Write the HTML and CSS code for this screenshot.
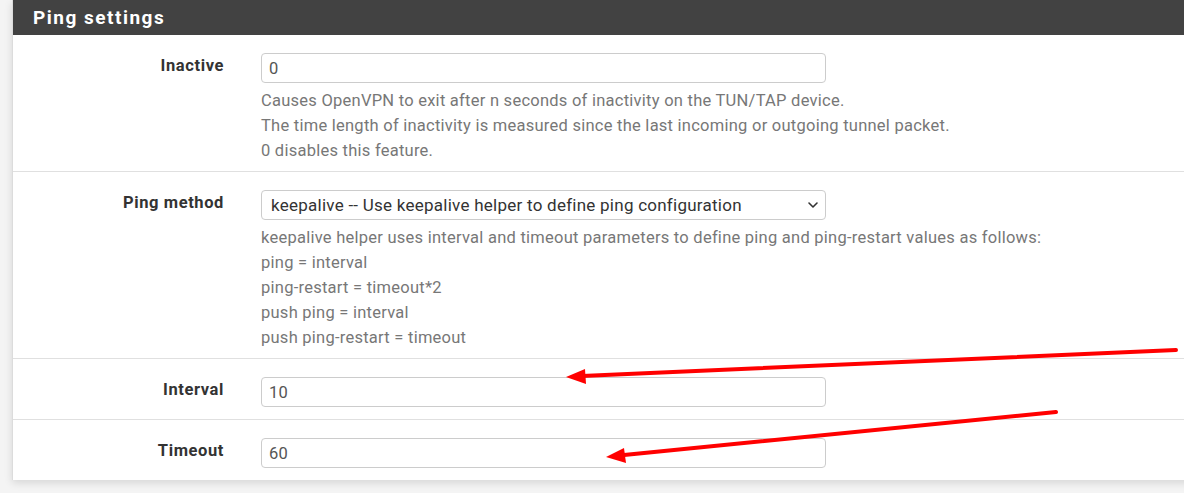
FILE: index.html
```html
<!DOCTYPE html>
<html>
<head>
<meta charset="utf-8">
<link rel="stylesheet" href="styles.css">
</head>
<body>
<div class="page">
  <div class="panel">
    <div class="panel-heading"><h2 class="panel-title">Ping settings</h2></div>
    <div class="panel-body">
      <div class="form-row first">
        <label class="row-label">Inactive</label>
        <div class="row-field">
          <input class="form-control" type="text" value="0">
          <div class="help">Causes OpenVPN to exit after n seconds of inactivity on the TUN/TAP device.<br>The time length of inactivity is measured since the last incoming or outgoing tunnel packet.<br>0 disables this feature.</div>
        </div>
      </div>
      <div class="form-row">
        <label class="row-label">Ping method</label>
        <div class="row-field">
          <div class="select-wrap">
            <select class="form-control select">
              <option>keepalive -- Use keepalive helper to define ping configuration</option>
            </select>
            <svg class="chevron" width="12" height="8" viewBox="0 0 12 8"><path d="M2 2 L6 6 L10 2" fill="none" stroke="#333" stroke-width="1.6" stroke-linecap="round" stroke-linejoin="round"/></svg>
          </div>
          <div class="help">keepalive helper uses interval and timeout parameters to define ping and ping-restart values as follows:<br>ping = interval<br>ping-restart = timeout*2<br>push ping = interval<br>push ping-restart = timeout</div>
        </div>
      </div>
      <div class="form-row">
        <label class="row-label">Interval</label>
        <div class="row-field">
          <input class="form-control" type="text" value="10">
        </div>
      </div>
      <div class="form-row">
        <label class="row-label">Timeout</label>
        <div class="row-field">
          <input class="form-control" type="text" value="60">
        </div>
      </div>
    </div>
  </div>
  <svg class="arrows" width="1184" height="493" viewBox="0 0 1184 493">
    <line x1="1176" y1="350" x2="582" y2="376" stroke="#ff0000" stroke-width="4" stroke-linecap="round"/>
    <polygon points="566,377 585,369 586,384" fill="#ff0000"/>
    <line x1="1056" y1="412" x2="624" y2="455" stroke="#ff0000" stroke-width="4" stroke-linecap="round"/>
    <polygon points="606,457 624,448 626,463" fill="#ff0000"/>
  </svg>
</div>
</body>
</html>
```

FILE: styles.css
```css
html, body {
  margin: 0;
  padding: 0;
}
body {
  background: #f4f4f4;
  font-family: Roboto, "Liberation Sans", sans-serif;
  width: 1184px;
  height: 493px;
  overflow: hidden;
}
.page {
  position: relative;
  width: 1184px;
  height: 493px;
}
.panel {
  margin-left: 12px;
  width: 1200px;
  background: #fff;
  border-left: 1px solid #dcdcdc;
  box-shadow: 0 3px 8px rgba(0, 0, 0, 0.12);
}
.panel-heading {
  background: #424242;
  height: 35px;
  display: flex;
  align-items: center;
  padding-left: 20px;
}
.panel-title {
  margin: 0;
  color: #fff;
  font-size: 19px;
  font-weight: 700;
  letter-spacing: 1.5px;
}
.form-row {
  display: grid;
  grid-template-columns: 248px 565px;
  padding: 18px 0 12px;
  border-top: 1px solid #e0e0e0;
}
.form-row.first {
  border-top: none;
}
.row-label {
  text-align: right;
  padding-right: 37px;
  font-weight: 700;
  font-size: 16.5px;
  letter-spacing: 0.6px;
  line-height: 25px;
  color: #333;
}
.row-field {
  display: flex;
  flex-direction: column;
}
.form-control {
  box-sizing: border-box;
  width: 565px;
  height: 30px;
  border: 1px solid #cccccc;
  border-radius: 4px;
  padding: 0 7px;
  font-family: Roboto, "Liberation Sans", sans-serif;
  font-size: 16.5px;
  letter-spacing: 0.3px;
  color: #555;
  background: #fff;
  margin: 0;
  outline: none;
}
.select-wrap {
  position: relative;
}
.select {
  appearance: none;
  -webkit-appearance: none;
  padding-left: 9px;
  font-size: 17px;
  letter-spacing: 0.25px;
  color: #333;
}
.chevron {
  position: absolute;
  right: 7px;
  top: 11px;
}
.help {
  margin-top: 5px;
  margin-bottom: -4px;
  font-size: 16.5px;
  letter-spacing: 0.25px;
  line-height: 25px;
  color: #777;
  white-space: nowrap;
}
.arrows {
  position: absolute;
  left: 0;
  top: 0;
  pointer-events: none;
}
```
